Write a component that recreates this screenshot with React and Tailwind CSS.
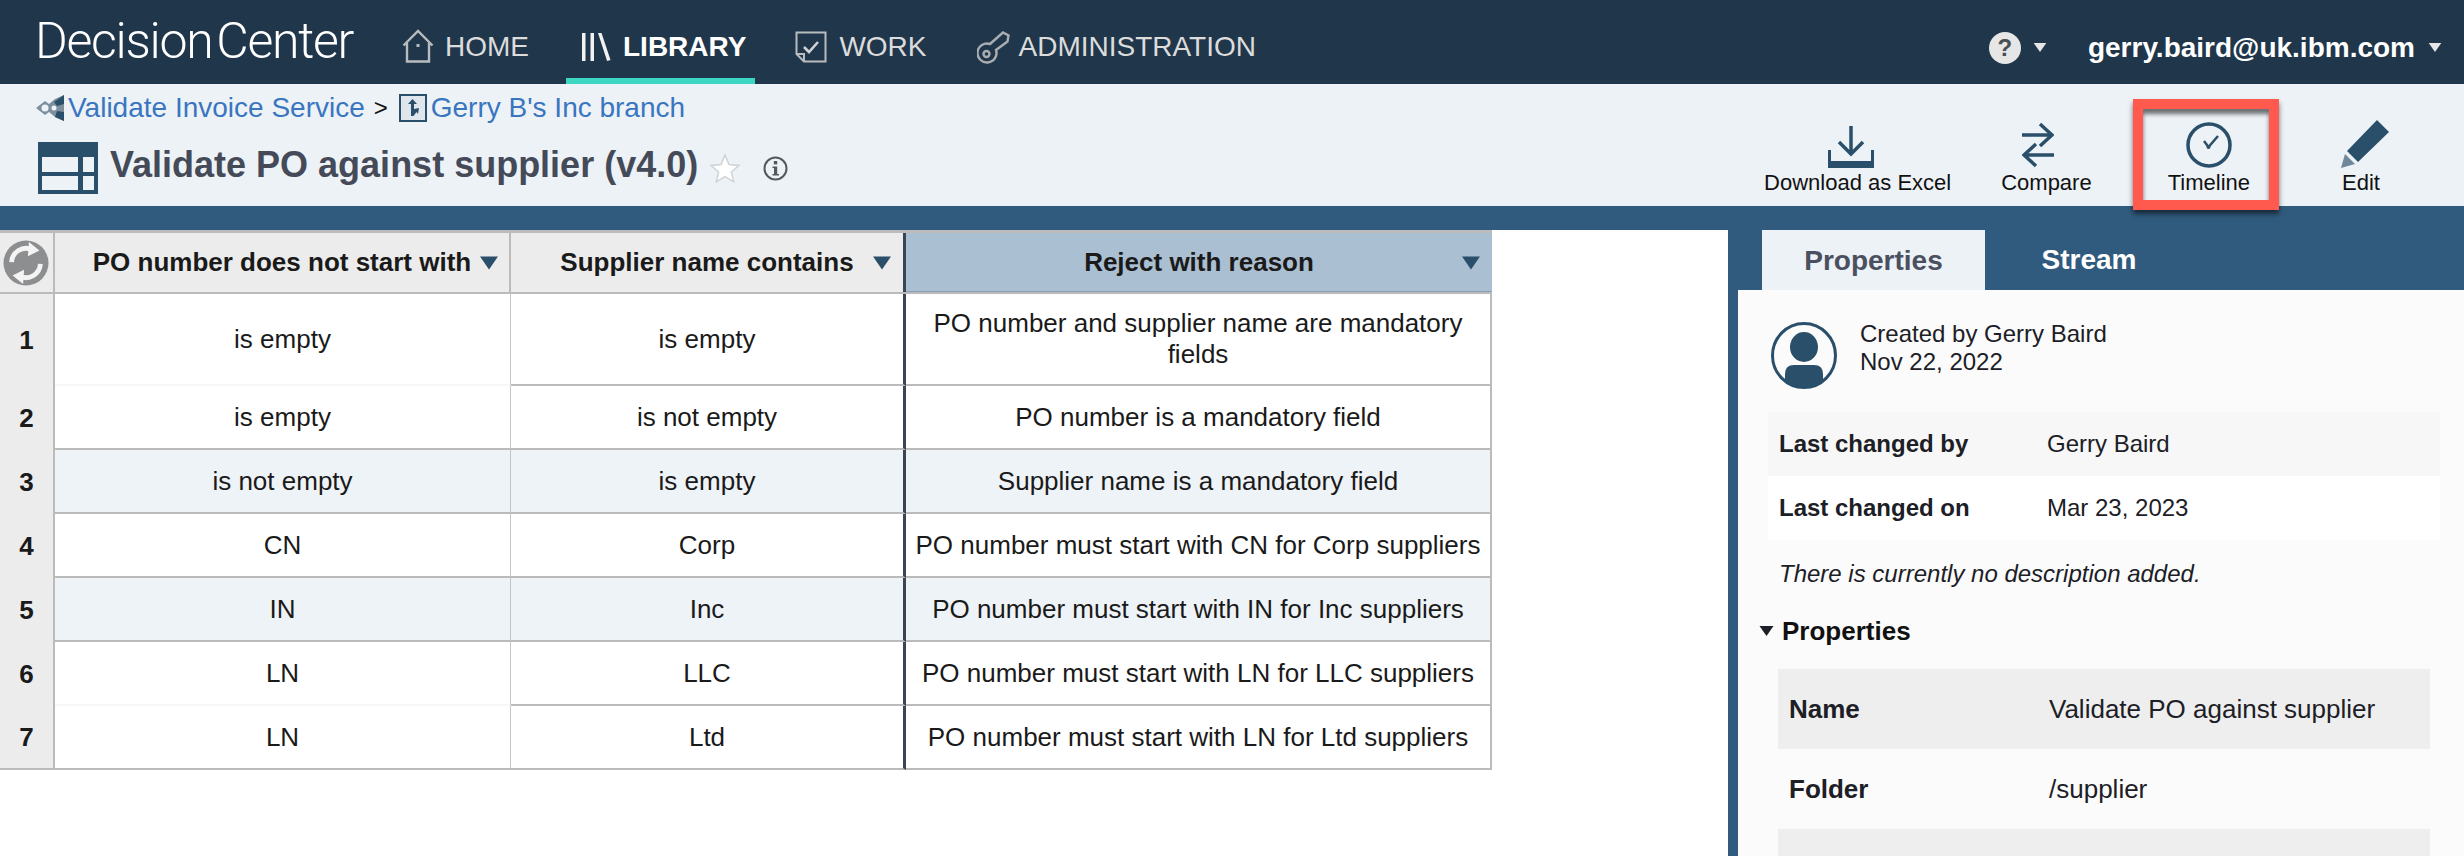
import { useState } from "react";

const rows = [
  { n: 1, a: "is empty", b: "is empty", c: "PO number and supplier name are mandatory fields", tall: true, soft: true },
  { n: 2, a: "is empty", b: "is not empty", c: "PO number is a mandatory field" },
  { n: 3, a: "is not empty", b: "is empty", c: "Supplier name is a mandatory field", alt: true },
  { n: 4, a: "CN", b: "Corp", c: "PO number must start with CN for Corp suppliers" },
  { n: 5, a: "IN", b: "Inc", c: "PO number must start with IN for Inc suppliers", alt: true },
  { n: 6, a: "LN", b: "LLC", c: "PO number must start with LN for LLC suppliers", soft: true },
  { n: 7, a: "LN", b: "Ltd", c: "PO number must start with LN for Ltd suppliers" },
];

function Caret({ className }) {
  return (
    <svg viewBox="0 0 14 10" className={className}>
      <path d="M0 0h14L7 10z" fill="currentColor" />
    </svg>
  );
}

function NavItem({ icon, label, active, gap, className }) {
  return (
    <div
      className={`flex h-[84px] items-center border-b-[6px] pt-[16px] text-[28px] ${gap} ${className} ${
        active ? "border-[#3dd6c3] font-bold text-white" : "border-transparent text-[#dcdcdc]"
      }`}
    >
      {icon}
      <span>{label}</span>
    </div>
  );
}

function Tool({ icon, label, className, children }) {
  return (
    <div className={`relative flex flex-col items-center ${className}`}>
      <div className="flex h-[50px] items-start">{icon}</div>
      <span className="text-[22px] leading-[26px] whitespace-nowrap text-[#111]">{label}</span>
      {children}
    </div>
  );
}

function HeaderCell({ label, className, caret }) {
  return (
    <div className={`relative flex items-center justify-center text-[26px] font-bold text-[#1a1a1a] ${className}`}>
      <span>{label}</span>
      <Caret className={`absolute top-[23px] h-[14px] w-[18px] text-[#2a4f6b] ${caret}`} />
    </div>
  );
}

function InfoRow({ label, value, className, labelWidth }) {
  return (
    <div className={`flex items-center text-[#1c2026] ${className}`}>
      <span className={`shrink-0 font-bold ${labelWidth}`}>{label}</span>
      <span>{value}</span>
    </div>
  );
}

export default function App() {
  const [tab] = useState("Properties");
  return (
    <div className="flex h-[856px] w-[2464px] flex-col overflow-hidden bg-white font-['Liberation_Sans',Arial,sans-serif]">
      {/* top nav */}
      <header className="flex h-[84px] shrink-0 items-start bg-[#20364a] pl-[38px]">
        <div className="mt-[13px] -ml-[3px] flex w-[320px] gap-[4px] font-['Roboto',sans-serif] text-[50px] leading-[56px] font-light tracking-[-1.300px] whitespace-nowrap text-white">
          <span>Decision</span>
          <span>Center</span>
        </div>
        <NavItem
          label="HOME"
          gap="gap-[11px]"
          className="ml-[47px]"
          icon={
            <svg viewBox="0 0 32 34" className="mb-[2px] h-[34px] w-[32px]" fill="none" stroke="#b9bcbf" strokeWidth="2.4">
              <path d="M1.500 16.500 16 2l14.500 14.500M5 14v18.500h22V14" />
              <rect x="14.500" y="15" width="3" height="3" fill="#b9bcbf" stroke="none" />
            </svg>
          }
        />
        <NavItem
          label="LIBRARY"
          active
          gap="gap-[12px]"
          className="ml-[37px] pr-[9px] pl-[15px]"
          icon={
            <svg viewBox="0 0 30 28" className="h-[28px] w-[30px]" fill="#f2f2f2">
              <rect x="1" y="0" width="3.500" height="28" />
              <rect x="9.500" y="0" width="3.500" height="28" />
              <path d="M17 0h3.500L29.500 27l-3.400 1z" />
            </svg>
          }
        />
        <NavItem
          label="WORK"
          gap="gap-[12px]"
          className="ml-[40px]"
          icon={
            <svg viewBox="0 0 32 32" className="h-[32px] w-[32px]" fill="none" stroke="#b9bcbf" strokeWidth="2">
              <path d="M1.500 1.500h29v29H9l-7.500-7.500zM1.500 23H9v7.500" />
              <path d="M9 16l5 5 9-10" strokeWidth="2.600" stroke="#d0d2d4" />
            </svg>
          }
        />
        <NavItem
          label="ADMINISTRATION"
          gap="gap-[9px]"
          className="ml-[50px]"
          icon={
            <svg viewBox="0 0 33 33" className="h-[33px] w-[33px]" fill="none" stroke="#a9adb1" strokeWidth="2.4">
              <path d="M13 13 26 1.500l5.500 3-1 6L19 19a9.500 9.500 0 1 1-6-6z" />
              <circle cx="9.500" cy="23" r="3" />
            </svg>
          }
        />
        <div className="ml-auto flex h-[84px] items-center pt-[11px] pr-[22px]">
          <div className="flex h-[32px] w-[32px] items-center justify-center rounded-full bg-[#e6e6e6] text-[24px] font-bold text-[#4a4f55]">?</div>
          <Caret className="ml-[12px] h-[9px] w-[14px] text-[#e6e6e6]" />
          <span className="ml-[41px] text-[28px] font-bold text-white">gerry.baird@uk.ibm.com</span>
          <Caret className="ml-[13px] h-[9px] w-[14px] text-[#e6e6e6]" />
        </div>
      </header>

      {/* breadcrumb + title + toolbar */}
      <div className="flex h-[122px] shrink-0 justify-between bg-[#edf2f6] pl-[36px]">
        <div className="flex flex-col">
          <div className="mt-[10px] flex h-[28px] items-center text-[28px] text-[#3a75c0]">
            <svg viewBox="0 0 28 26" className="h-[26px] w-[28px]">
              <path d="M28 0v26l-9-4-6-5-4 3-9-7 9-7 4 3 6-5z" fill="#7d8f9d" />
              <path d="M28 0v9l-7 2-3-4zM28 17v9l-9-4 2-6z" fill="#2a4f6b" />
              <circle cx="9" cy="13" r="3.500" fill="#edf2f6" />
              <circle cx="18" cy="13" r="2.500" fill="#edf2f6" />
            </svg>
            <span className="ml-[4px]">Validate Invoice Service</span>
            <span className="ml-[9px] text-[24px] text-[#111]">&gt;</span>
            <svg viewBox="0 0 28 28" className="ml-[11px] h-[28px] w-[28px]">
              <rect x="1" y="1" width="26" height="26" fill="#dfe6ec" stroke="#2a4f6b" strokeWidth="2" />
              <path d="M12 22V10H9l4.500-5L18 10h-3v5l5-1-1 6-1.500-2-3 4z" fill="#2a4f6b" />
            </svg>
            <span className="ml-[4px]">Gerry B's Inc branch</span>
          </div>
          <div className="mt-[20px] ml-[2px] flex items-center">
            <svg viewBox="0 0 60 52" className="h-[52px] w-[60px]" fill="#2a4f6b">
              <path fillRule="evenodd" d="M0 0h60v52H0zM4 15v15h36V15zm41 0v15h11V15zM4 34v14h36V34zm41 0v14h11V34z" />
            </svg>
            <span className="mb-[7px] ml-[12px] text-[36px] leading-[41px] font-bold whitespace-nowrap text-[#444a58]">Validate PO against supplier (v4.0)</span>
            <svg viewBox="0 0 32 30" className="ml-[11px] h-[30px] w-[32px]">
              <path d="M16 2l4 9.500 10 .9-7.600 6.600 2.300 9.800L16 23.600 7.300 28.800l2.300-9.800L2 12.400l10-.9z" fill="#fff" stroke="#cfd3d6" strokeWidth="1.500" />
            </svg>
            <svg viewBox="0 0 25 25" className="ml-[22px] h-[25px] w-[25px]">
              <circle cx="12.500" cy="12.500" r="11" fill="none" stroke="#55595e" strokeWidth="2" />
              <rect x="10.800" y="5" width="3.400" height="3.400" fill="#55595e" />
              <path d="M9.500 10.500h4.700V18h1.800v1.500H9.500V18h1.500v-6H9.500z" fill="#55595e" />
            </svg>
          </div>
        </div>

        <div className="flex items-start pt-[36px] pr-[83px]">
          <Tool
            label="Download as Excel"
            icon={
              <svg viewBox="0 0 46 42" className="mt-[6px] mr-[14px] h-[42px] w-[46px]" fill="none" stroke="#2a4f6b">
                <path d="M23 0v27M11 16l12 12 12-12" strokeWidth="3.500" />
                <path d="M1.500 24v14h43V24" strokeWidth="3" />
                <rect x="0" y="35" width="46" height="7" fill="#2a4f6b" stroke="none" />
              </svg>
            }
          />
          <Tool
            label="Compare"
            className="ml-[50px]"
            icon={
              <svg viewBox="0 0 32 46" className="mt-[2px] mr-[16px] h-[46px] w-[32px]" fill="none" stroke="#2a4f6b" strokeWidth="3.500">
                <path d="M0 13h29M18 2l12 11-12 11" />
                <path d="M32 33H3M14 22 2 33l12 11" />
              </svg>
            }
          />
          <Tool
            label="Timeline"
            className="ml-[76px]"
            icon={
              <svg viewBox="0 0 46 46" className="mt-[2px] h-[46px] w-[46px]" fill="none" stroke="#2a4f6b">
                <circle cx="23" cy="23" r="21" strokeWidth="3.500" />
                <path d="M18 19l4.500 6L32 14" strokeWidth="2.500" />
                <circle cx="22.500" cy="25" r="2" fill="#2a4f6b" stroke="none" />
              </svg>
            }
          >
            <div className="absolute -top-[21px] -right-[29px] -left-[35px] z-10 h-[111px] border-[10px] border-[#ff5a4d] shadow-[0_4px_5px_rgba(0,0,0,0.55),inset_0_5px_4px_rgba(0,0,0,0.55)]" />
          </Tool>
          <Tool
            label="Edit"
            className="ml-[91px]"
            icon={
              <svg viewBox="0 0 48 48" className="-mr-[8px] h-[48px] w-[48px]" fill="#2a4f6b">
                <path d="M36 0l12 12-31 30L6 31z" />
                <path d="M4 34l10 10-14 4z" fill="#6f8799" />
              </svg>
            }
          />
        </div>
      </div>

      <div className="flex min-h-0 flex-1">
        {/* decision table */}
        <div className="flex w-[1728px] shrink-0 flex-col">
          <div className="h-[24px] shrink-0 bg-[#315b7e]" />
          <div className="w-[1492px]">
            <div className="flex h-[64px] border-t-[3px] border-b-[2px] border-[#bbbbbb] bg-[#ececec]">
              <div className="flex w-[55px] shrink-0 items-center border-r-[2px] border-[#bbbbbb] pl-[2px]">
                <svg viewBox="0 0 48 48" className="h-[46px] w-[48px]">
                  <circle cx="24" cy="24" r="23.500" fill="#8d8e90" />
                  <g fill="none" stroke="#f4f4f4" strokeWidth="5">
                    <path d="M9 23a15 15 0 0 1 21-13" />
                    <path d="M39 25a15 15 0 0 1-21 13" />
                  </g>
                  <path d="M27 2l11 9-12 6zM21 46 10 37l12-6z" fill="#f4f4f4" />
                </svg>
              </div>
              <HeaderCell label="PO number does not start with" caret="right-[11px]" className="w-[456px] shrink-0 border-r-[2px] border-[#bbbbbb]" />
              <HeaderCell label="Supplier name contains" caret="right-[12px]" className="w-[395px] shrink-0 border-r-[3px] border-[#3b4452]" />
              <HeaderCell label="Reject with reason" caret="right-[12px]" className="flex-1 border-b-[1px] border-[#8ba0b4] bg-[#aabfd2]" />
            </div>
            {rows.map((row) => (
              <div key={row.n} className={`flex text-[26px] text-[#1a1a1a] ${row.tall ? "h-[92px]" : "h-[64px]"} ${row.alt ? "bg-[#eef3f7]" : "bg-white"}`}>
                <div className={`flex w-[55px] shrink-0 items-center justify-center border-r-[2px] border-[#bbbbbb] bg-[#ececec] font-bold ${row.n === 7 ? "border-b-[2px]" : ""}`}>
                  {row.n}
                </div>
                <div className={`flex w-[456px] shrink-0 items-center justify-center border-r-[1px] border-b-[2px] border-r-[#c4c4c4] ${row.soft ? "border-b-[#f6f6f6]" : "border-b-[#bbbbbb]"}`}>
                  {row.a}
                </div>
                <div className="flex w-[395px] shrink-0 items-center justify-center border-r-[3px] border-b-[2px] border-r-[#3b4452] border-b-[#bbbbbb]">
                  {row.b}
                </div>
                <div className="flex flex-1 items-center justify-center border-r-[2px] border-b-[2px] border-[#bbbbbb] px-[8px] text-center leading-[31px]">
                  {row.c}
                </div>
              </div>
            ))}
          </div>
        </div>

        {/* side panel */}
        <div className="flex flex-1 flex-col bg-[#315b7e]">
          <div className="mt-[24px] ml-[34px] flex h-[60px] shrink-0 text-[28px] font-bold">
            <div className={`flex w-[223px] items-center justify-center pt-[2px] ${tab === "Properties" ? "bg-[#edf2f6] text-[#4a5060]" : "text-white"}`}>Properties</div>
            <div className="flex w-[208px] items-center justify-center text-white">Stream</div>
          </div>
          <div className="ml-[10px] flex-1 bg-[#fbfbfb] pt-[32px]">
            <div className="ml-[33px] flex items-start">
              <svg viewBox="0 0 66 67" className="h-[67px] w-[66px]">
                <ellipse cx="33" cy="33.500" rx="31.500" ry="32" fill="none" stroke="#2a4f6b" strokeWidth="3" />
                <ellipse cx="33" cy="25" rx="14" ry="15" fill="#2a4f6b" />
                <path d="M14 60V52q0-9 9-9h20q9 0 9 9v8q-9 6-19 6t-19-6z" fill="#2a4f6b" />
              </svg>
              <div className="-mt-[2px] ml-[23px] text-[24px] leading-[28px] text-[#1c2026]">
                <div>Created by Gerry Baird</div>
                <div>Nov 22, 2022</div>
              </div>
            </div>
            <div className="mt-[23px] ml-[30px] w-[672px] text-[24px]">
              <InfoRow label="Last changed by" value="Gerry Baird" labelWidth="w-[268px]" className="h-[64px] bg-[#f7f7f7] pl-[11px]" />
              <InfoRow label="Last changed on" value="Mar 23, 2023" labelWidth="w-[268px]" className="h-[64px] bg-white pl-[11px]" />
            </div>
            <div className="ml-[41px] flex h-[68px] items-center text-[24px] text-[#1c2026] italic">There is currently no description added.</div>
            <div className="ml-[21px] flex h-[46px] items-center text-[26px] font-bold text-[#111]">
              <Caret className="h-[10px] w-[15px] text-[#1c2026]" />
              <span className="ml-[8px]">Properties</span>
            </div>
            <div className="mt-[15px] ml-[40px] w-[652px] text-[26px]">
              <InfoRow label="Name" value="Validate PO against supplier" labelWidth="w-[260px]" className="h-[80px] bg-[#eeeeee] pl-[11px]" />
              <InfoRow label="Folder" value="/supplier" labelWidth="w-[260px]" className="h-[80px] pl-[11px]" />
              <div className="h-[80px] bg-[#eeeeee]" />
            </div>
          </div>
        </div>
      </div>
    </div>
  );
}
